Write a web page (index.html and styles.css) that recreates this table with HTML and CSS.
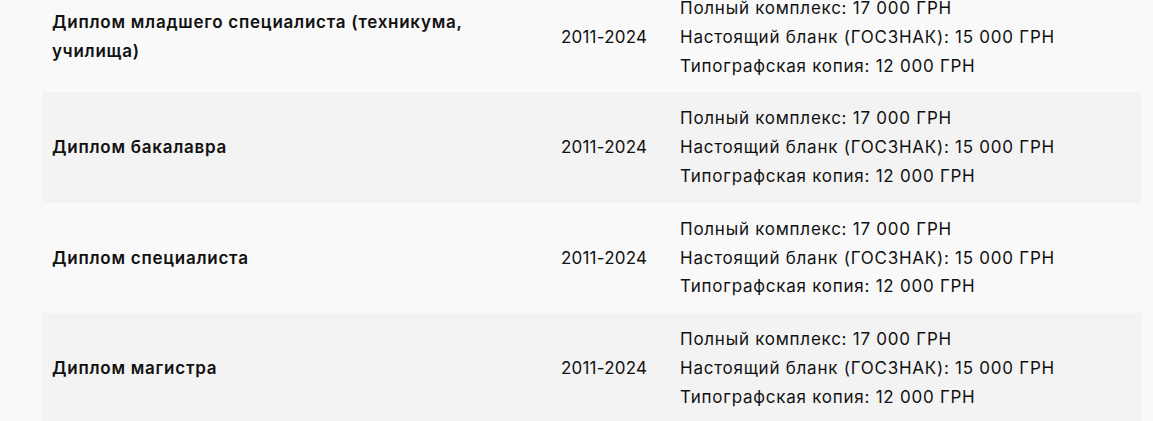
FILE: index.html
```html
<!DOCTYPE html>
<html lang="ru">
<head>
<meta charset="utf-8">
<title>Цены на дипломы</title>
<link rel="stylesheet" href="styles.css">
</head>
<body>
<div class="page">
  <table class="prices">
    <colgroup>
      <col class="c-name">
      <col class="c-years">
      <col class="c-price">
    </colgroup>
    <tbody>
      <tr>
        <td class="name">Диплом младшего специалиста (техникума, училища)</td>
        <td class="years">2011-2024</td>
        <td class="price">Полный комплекс: 17 000 ГРН<br>Настоящий бланк (ГОСЗНАК): 15 000 ГРН<br>Типографская копия: 12 000 ГРН</td>
      </tr>
      <tr>
        <td class="name">Диплом бакалавра</td>
        <td class="years">2011-2024</td>
        <td class="price">Полный комплекс: 17 000 ГРН<br>Настоящий бланк (ГОСЗНАК): 15 000 ГРН<br>Типографская копия: 12 000 ГРН</td>
      </tr>
      <tr>
        <td class="name">Диплом специалиста</td>
        <td class="years">2011-2024</td>
        <td class="price">Полный комплекс: 17 000 ГРН<br>Настоящий бланк (ГОСЗНАК): 15 000 ГРН<br>Типографская копия: 12 000 ГРН</td>
      </tr>
      <tr>
        <td class="name">Диплом магистра</td>
        <td class="years">2011-2024</td>
        <td class="price">Полный комплекс: 17 000 ГРН<br>Настоящий бланк (ГОСЗНАК): 15 000 ГРН<br>Типографская копия: 12 000 ГРН</td>
      </tr>
    </tbody>
  </table>
</div>
</body>
</html>
```

FILE: styles.css
```css
html, body {
  margin: 0;
  padding: 0;
  background: #f9f9f9;
}
body {
  font-family: Inter, "Open Sans", "Liberation Sans", sans-serif;
  font-size: 17px;
  letter-spacing: 0.75px;
  color: #111;
}
.page {
  padding: 0 12px 0 42px;
  overflow: hidden;
}
.prices {
  width: 1099px;
  margin-top: -18px;
  border-collapse: collapse;
  table-layout: fixed;
}
.c-name { width: 509px; }
.c-years { width: 119px; }
.c-price { width: 471px; }
.prices td {
  padding: 12px 10px;
  line-height: 28.8px;
  vertical-align: middle;
}
.prices tr:nth-child(even) td {
  background: #f3f3f3;
}
.name {
  font-weight: 600;
  padding-right: 60px;
}
.years {
  letter-spacing: 0.2px;
}
```
